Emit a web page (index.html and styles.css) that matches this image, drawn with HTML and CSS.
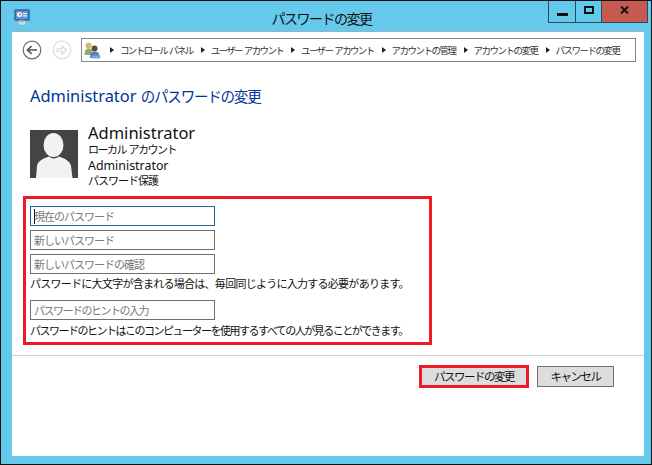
FILE: index.html
```html
<!DOCTYPE html>
<html lang="ja">
<head>
<meta charset="utf-8">
<title>パスワードの変更</title>
<link rel="stylesheet" href="styles.css">
</head>
<body>
<div class="window">
  <header class="titlebar">
    <svg class="app-icon" width="17" height="16" viewBox="0 0 17 16">
      <rect x="0.5" y="0.5" width="15" height="11" rx="1" fill="#2f6db5" stroke="#4a78a8"/>
      <rect x="2" y="2" width="12" height="8" fill="#5b95d6"/>
      <circle cx="5.5" cy="5.5" r="2.5" fill="#fff"/>
      <rect x="5" y="4.2" width="2" height="2.4" fill="#f0a030"/>
      <path d="M9 4.5h4M9 6.8h4" stroke="#fff" stroke-width="1.2"/>
      <ellipse cx="8" cy="13.5" rx="3.5" ry="2.3" fill="#d8d8d8"/>
      <rect x="6" y="11.5" width="4" height="1.5" fill="#9aa5b0"/>
    </svg>
    <h1 class="title">パスワードの変更</h1>
    <div class="controls">
      <div class="ctl ctl-min"><span class="min-glyph"></span></div>
      <div class="ctl ctl-max"><span class="max-glyph"></span></div>
      <div class="ctl ctl-close"><svg width="9" height="8" viewBox="0 0 9 8"><path d="M1 0.5l7 7M8 0.5l-7 7" stroke="#111" stroke-width="2"/></svg></div>
    </div>
  </header>
  <main class="content">
    <nav class="navbar">
      <svg class="nav-btn" width="20" height="20" viewBox="0 0 20 20">
        <circle cx="10" cy="10" r="8.8" fill="#fff" stroke="#6f6f6f" stroke-width="1.2"/>
        <path d="M15 10H6M9.5 6.2L5.5 10l4 3.8" fill="none" stroke="#555" stroke-width="1.7"/>
      </svg>
      <svg class="nav-btn" width="20" height="20" viewBox="0 0 20 20">
        <circle cx="10" cy="10" r="8.8" fill="#fff" stroke="#dcdcdc" stroke-width="1.2"/>
        <path d="M5 8.7h5V6l4.5 4-4.5 4v-2.7H5z" fill="none" stroke="#d8d8d8" stroke-width="1.1"/>
      </svg>
      <div class="crumbs">
        <svg class="crumb-icon" width="17" height="17" viewBox="0 0 17 17">
          <circle cx="4.5" cy="3.5" r="3" fill="#d2b878"/>
          <path d="M0.500 13c0-5 1.500-6.500 4-6.500S9 8 9 13z" fill="#8fae6c"/>
          <circle cx="10.500" cy="6.500" r="3" fill="#6b4a32"/>
          <path d="M6 16c0-4.500 1.500-6.500 4.800-6.500s5 2 5 6.500z" fill="#4f86bd"/>
          <rect x="7.500" y="13.500" width="9" height="3" rx="1.500" fill="#7aa8d8"/>
        </svg>
        <span class="arrow"></span><span class="crumb-sp">コントロール パネル</span>
        <span class="arrow"></span><span class="crumb-sp">ユーザー アカウント</span>
        <span class="arrow"></span><span class="crumb-sp">ユーザー アカウント</span>
        <span class="arrow"></span><span>アカウントの管理</span>
        <span class="arrow"></span><span>アカウントの変更</span>
        <span class="arrow"></span><span>パスワードの変更</span>
      </div>
    </nav>
    <h2 class="heading">Administrator <span class="heading-jp">のパスワードの変更</span></h2>
    <section class="user">
      <svg class="avatar" width="48" height="48" viewBox="0 0 48 48">
        <rect width="48" height="48" fill="#444"/>
        <path d="M6 48l1-12c0.500-5 7-8 12-9.500c3 2.500 7 2.500 10 0c5 1.500 11 4.500 12 9.500l1.500 12z" fill="#f2f2f2"/>
        <ellipse cx="23.500" cy="15" rx="10" ry="12" fill="#f2f2f2"/>
      </svg>
      <div class="user-info">
        <div class="user-name">Administrator</div>
        <div class="user-line user-line-jp user-line-sp">ローカル アカウント</div>
        <div class="user-line">Administrator</div>
        <div class="user-line user-line-jp">パスワード保護</div>
      </div>
    </section>
    <form class="pw-box">
      <input class="field field-focus" type="text" placeholder="現在のパスワード">
      <input class="field" type="text" placeholder="新しいパスワード">
      <input class="field" type="text" placeholder="新しいパスワードの確認">
      <p class="note note-first">パスワードに大文字が含まれる場合は、毎回同じように入力する必要があります。</p>
      <input class="field field-hint" type="text" placeholder="パスワードのヒントの入力">
      <p class="note note-last">パスワードのヒントはこのコンピューターを使用するすべての人が見ることができます。</p>
    </form>
    <footer class="actions">
      <div class="actions-row">
        <div class="primary-wrap"><button class="btn btn-primary" type="button">パスワードの変更</button></div>
        <button class="btn btn-cancel" type="button">キャンセル</button>
      </div>
    </footer>
  </main>
</div>
</body>
</html>
```
FILE: styles.css
```css
* { box-sizing: border-box; }
html, body { margin: 0; padding: 0; }
body {
  width: 652px;
  height: 465px;
  overflow: hidden;
  background: #65c9eb;
  font-family: "Noto Sans", "Noto Sans CJK JP", sans-serif;
  color: #000;
}
.window {
  width: 652px;
  height: 465px;
  display: flex;
  flex-direction: column;
  background: #65c9eb;
  border: 1px solid #111;
}
.titlebar {
  height: 30px;
  flex: none;
  display: flex;
  align-items: flex-start;
  padding-left: 13px;
  position: relative;
}
.app-icon { margin-top: 8px; flex: none; }
.title {
  position: absolute;
  left: 0;
  right: 0;
  top: 8px;
  margin: 0;
  padding-right: 9px;
  text-align: center;
  font-weight: 400;
  font-size: 14px;
  letter-spacing: -1.5px;
  line-height: 18px;
  font-family: "Noto Sans CJK JP", sans-serif;
  color: #111;
}
.controls {
  margin-left: auto;
  margin-right: 3px;
  display: flex;
  height: 22px;
  border: 1px solid #2a4a5c;
  border-top: 0;
  position: relative;
}
.ctl {
  display: flex;
  align-items: center;
  justify-content: center;
  height: 100%;
}
.ctl-min { width: 27px; border-right: 1px solid #2a4a5c; }
.ctl-max { width: 26px; border-right: 1px solid #2a4a5c; }
.ctl-close { width: 45px; background: #c75a50; }
.min-glyph { width: 11px; height: 3px; background: #111; margin-top: 5px; }
.max-glyph { width: 10px; height: 8px; border: 2px solid #111; margin-top: -3px; }
.ctl-close svg { margin-top: -3px; }
.content {
  flex: 1;
  margin: 0 7px 8px 11px;
  background: #fff;
  border-top: 1px solid #8cb4c4;
  display: flex;
  flex-direction: column;
  min-height: 0;
}
.navbar {
  display: flex;
  align-items: center;
  height: 24px;
  margin-top: 6px;
  padding-left: 10px;
  margin-right: 8px;
  flex: none;
}
.nav-btn { flex: none; margin-right: 10px; }
.nav-btn + .nav-btn { margin-right: 9px; }
.crumbs {
  flex: 1;
  height: 24px;
  border: 1px solid #858585;
  display: flex;
  align-items: center;
  font-family: "Noto Sans CJK JP", sans-serif;
  font-size: 9.5px;
  letter-spacing: -1.5px;
  color: #333;
  white-space: nowrap;
  padding-left: 2px;
}
.crumb-sp { letter-spacing: -1.65px; word-spacing: 1.5px; }
.crumb-icon { flex: none; margin-right: 1px; }
.arrow {
  width: 0;
  height: 0;
  border-left: 4px solid #222;
  border-top: 3px solid transparent;
  border-bottom: 3px solid transparent;
  margin: 0 6px 0 8px;
  flex: none;
}
.heading {
  margin: 23px 0 0 18px;
  font-weight: 400;
  font-size: 16.4px;
  line-height: 22px;
  color: #003399;
  flex: none;
  font-family: "Noto Sans", "Noto Sans CJK JP", sans-serif;
}
.heading-jp {
  font-family: "Noto Sans CJK JP", sans-serif;
  font-size: 14.5px;
  letter-spacing: -1.2px;
}
.user {
  display: flex;
  margin: 18px 0 0 18px;
  flex: none;
  height: 66px;
}
.avatar { flex: none; margin-top: 5px; }
.user-info { margin-left: 10px; margin-top: -1px; }
.user-name { font-size: 16.5px; line-height: 18px; color: #111; }
.user-line { font-size: 12.4px; line-height: 15.500px; color: #111; }
.user-line-jp {
  font-family: "Noto Sans CJK JP", sans-serif;
  font-size: 11px;
  letter-spacing: -1px;
}
.user-line-sp { letter-spacing: -1.5px; word-spacing: 1.5px; }
.pw-box {
  margin: 5px 0 0 11px;
  width: 409px;
  height: 149px;
  border: 3px solid #ed1c24;
  padding: 7px 0 0 4px;
  display: flex;
  flex-direction: column;
  flex: none;
}
.field {
  display: block;
  width: 185px;
  height: 20px;
  flex: none;
  border: 1px solid #707070;
  padding: 0 0 0 3px;
  margin: 0 0 4px;
  font-family: "Noto Sans CJK JP", sans-serif;
  font-size: 11px;
  letter-spacing: -1px;
  background: #fff;
  outline: none;
  border-radius: 0;
}
.field-hint { letter-spacing: -1.500px; }
.field::placeholder { color: #777; opacity: 1; }
.field-focus {
  border-color: #2a6496;
  background: linear-gradient(#111, #111) 3px 2px / 1px 15px no-repeat #fff;
}
.note {
  font-family: "Noto Sans CJK JP", sans-serif;
  font-size: 11px;
  line-height: 16px;
  color: #111;
  white-space: nowrap;
}
.note-first { margin: -3px 0 9px; letter-spacing: -0.73px; }
.note-last { margin: -2px 0 0; letter-spacing: -1.5px; }
.actions {
  margin-top: 10px;
  border-top: 1px solid #d0d0d0;
  flex: none;
  padding: 9px 30px 0 0;
}
.actions-row {
  display: flex;
  justify-content: flex-end;
  align-items: center;
  gap: 8px;
}
.primary-wrap {
  border: 3px solid #ed1c24;
  width: 110px;
  height: 23px;
  flex: none;
}
.btn {
  display: block;
  font-family: "Noto Sans CJK JP", sans-serif;
  font-size: 11.500px;
  letter-spacing: -1.500px;
  color: #111;
  background: #dddddd;
  padding: 0;
  border-radius: 0;
  line-height: 1;
}
.btn-primary { width: 100%; height: 100%; border: 0; }
.btn-cancel { width: 77px; height: 21px; border: 1px solid #707070; flex: none; }
```
